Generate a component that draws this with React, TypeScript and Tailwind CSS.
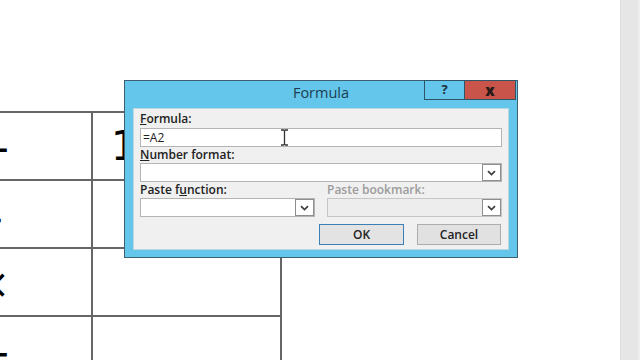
import React from 'react'

function Chevron() {
  return (
    <svg width="9" height="6" viewBox="0 0 9 6">
      <path d="M1 1.2 L4.5 4.6 L8 1.2" fill="none" stroke="#3c3c3c" strokeWidth="1.7" />
    </svg>
  )
}

function Dropdown({ className = '', disabled = false }: { className?: string; disabled?: boolean }) {
  return (
    <div
      className={`flex h-[19px] items-stretch justify-end border ${
        disabled ? 'border-[#c6c6c6] bg-[#ededed]' : 'border-[#b4b4b4] bg-white'
      } ${className}`}
    >
      <div className="flex w-[19px] items-center justify-center border border-[#8e8e8e] bg-white">
        <Chevron />
      </div>
    </div>
  )
}

function Label({ children, className = '' }: { children: React.ReactNode; className?: string }) {
  return <div className={`h-[14px] text-[12px] leading-[14px] font-semibold ${className}`}>{children}</div>
}

function Cursor() {
  return (
    <svg width="9" height="17" viewBox="0 0 9 17" className="absolute left-[139px] top-[0px]">
      <path d="M1 1 H3.5 Q4.5 1 4.5 2.5 V14.5 Q4.5 16 3.5 16 H1 M8 1 H5.5 Q4.5 1 4.5 2.5 M4.5 14.5 Q4.5 16 5.5 16 H8" fill="none" stroke="#333" strokeWidth="1.3" />
    </svg>
  )
}

const rows = [
  { op: '+', pad: 'pr-[80px] pt-[5px]', second: '1' },
  { op: '−', pad: 'pr-[86px] pt-[8px]', second: '' },
  { op: '×', pad: 'pr-[81px] pt-[3px]', second: '' },
  { op: '÷', pad: 'pr-[80px] pt-[6px]', second: '' },
]

export default function App() {
  return (
    <div className="relative flex h-[360px] w-[640px] overflow-hidden bg-white font-['Open_Sans','Noto_Sans',sans-serif] text-[#222]">
      {/* Document page with the table */}
      <div className="flex-1 overflow-hidden pt-[111px]">
        <div className="-ml-[60px] w-[342px] border-t-2 border-[#666] font-['DejaVu_Sans',sans-serif] text-[40px] text-black">
          {rows.map((r, i) => (
            <div key={i} className="grid h-[68px] grid-cols-[153px_189px] border-b-2 border-[#666]">
              <div className={`flex items-center justify-end border-r-2 border-[#666] ${r.pad}`}>{r.op}</div>
              <div className="flex items-center border-r-2 border-[#666] pl-[18px]">{r.second}</div>
            </div>
          ))}
        </div>
      </div>

      {/* Scrollbar strip */}
      <div className="w-[20px] border-l border-[#dedede] bg-[#e6e6e6]">
        <div className="ml-auto h-full w-[2px] bg-[#eeeeee]" />
      </div>

      {/* Formula dialog */}
      <div className="absolute left-[124px] top-[80px] flex h-[178px] w-[394px] flex-col border border-[#3d5f72] bg-[#63c6ea]">
        <div className="relative h-[27px] shrink-0">
          <div className="pt-[2px] text-center text-[14.5px] leading-[20px] text-[#1d3c50]">Formula</div>
          <div className="absolute right-[1px] top-[-1px] flex h-[20px]">
            <div className="flex w-[41px] items-center justify-center border border-[#2f5468] bg-[#63c6ea] text-[13px] font-bold text-[#1d2f3c]">
              ?
            </div>
            <div className="flex w-[51px] items-center justify-center border border-l-0 border-[#2f5468] bg-[#c9544a] text-[15px] font-extrabold text-[#2a1a18]">
              x
            </div>
          </div>
        </div>
        <div className="mx-[8px] mb-[7px] flex flex-1 flex-col border border-[#bcd6e2] bg-[#f0f0f0] px-[6px] pt-[3px]">
          <Label>
            <span className="underline">F</span>ormula:
          </Label>
          <div className="relative mt-[2px] h-[19px] border border-[#b4b4b4] bg-white pl-[2px] text-[12px] leading-[17px]">
            =A2
            <Cursor />
          </div>
          <Label className="mt-[1px]">
            <span className="underline">N</span>umber format:
          </Label>
          <Dropdown className="mt-[1px]" />
          <Label className="mt-[1px]">
            <div className="flex">
              <div className="w-[187px]">
                Paste f<span className="underline">u</span>nction:
              </div>
              <div className="text-[#9c9c9c]">Paste bookmark:</div>
            </div>
          </Label>
          <div className="mt-[1px] flex gap-[12px]">
            <Dropdown className="w-[175px]" />
            <Dropdown className="flex-1" disabled />
          </div>
          <div className="mt-[7px] flex justify-end gap-[13px] pr-[1px] text-[12px] font-semibold">
            <div className="flex h-[21px] w-[85px] items-center justify-center border border-[#3d7fb5] bg-[#e3e3e3]">OK</div>
            <div className="flex h-[21px] w-[84px] items-center justify-center border border-[#adadad] bg-[#e1e1e1]">Cancel</div>
          </div>
        </div>
      </div>
    </div>
  )
}
